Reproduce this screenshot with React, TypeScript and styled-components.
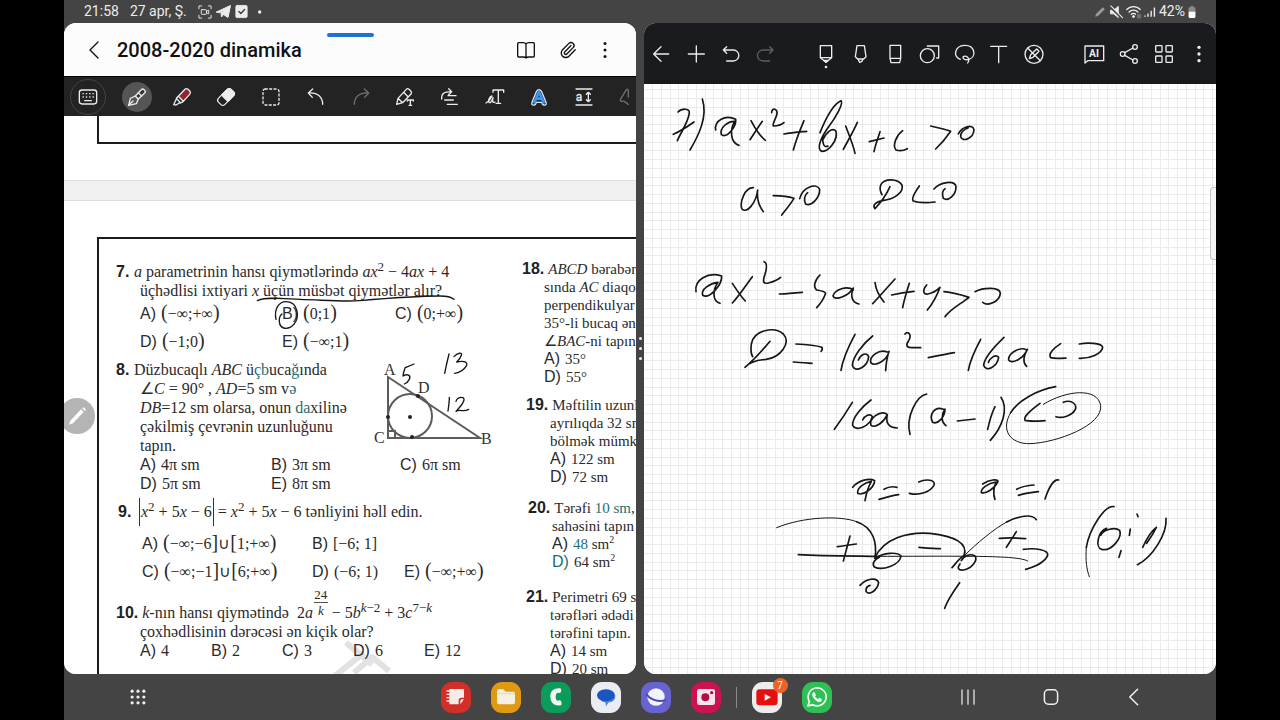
import React from "react";
import styled, { createGlobalStyle } from "styled-components";
import { Paperclip } from "lucide-react";

const Global = createGlobalStyle`
  * { box-sizing: border-box; }
  body { margin: 0; background: #000; font-family: Roboto, "Liberation Sans", sans-serif; }
  button { border: 0; padding: 0; background: none; color: inherit; font: inherit; cursor: pointer; }
  p, ul, ol { margin: 0; padding: 0; list-style: none; }
`;

/* ---------- shell ---------- */

const Device = styled.div`
  display: flex;
  flex-direction: column;
  height: 100vh;
  margin: 0 5%;
  background: #444;
  overflow: hidden;
`;

const StatusBar = styled.header`
  display: flex;
  align-items: center;
  justify-content: space-between;
  height: 23px;
  padding: 0 18px 0 20px;
  color: #ececec;
  font-size: 14px;
  line-height: 23px;
`;

const StatusGroup = styled.div<{ $gap: number }>`
  display: flex;
  align-items: center;
  gap: ${(p) => p.$gap}px;
`;

const StatusDate = styled.span`
  padding: 0 7px;
`;

const Split = styled.main`
  flex: 1;
  min-height: 0;
  display: grid;
  grid-template-columns: minmax(0, 1fr) 8px minmax(0, 1fr);
`;

const Pane = styled.section`
  display: flex;
  flex-direction: column;
  min-height: 0;
  overflow: hidden;
  border-radius: 12px;
  background: #fff;
`;

const Divider = styled.div`
  display: flex;
  flex-direction: column;
  align-items: center;
  justify-content: center;
  gap: 7px;
`;

const DividerDot = styled.i`
  width: 3px;
  height: 3px;
  border-radius: 50%;
  background: #f4f4f4;
`;

const Icon = styled.svg<{ $size?: number }>`
  display: block;
  flex: none;
  width: ${(p) => p.$size ?? 20}px;
  height: ${(p) => p.$size ?? 20}px;
  fill: none;
  stroke: currentColor;
  stroke-width: 4;
  stroke-linecap: round;
  stroke-linejoin: round;
  overflow: visible;
`;

/* ---------- left pane: document viewer ---------- */

const DocHeader = styled.div`
  position: relative;
  display: flex;
  align-items: center;
  height: 53px;
  flex: none;
  padding: 0 15px 0 10px;
  background: #fcfcfc;
  color: #111;

  &::before {
    content: "";
    position: absolute;
    top: 10px;
    left: 50%;
    width: 47px;
    height: 4px;
    margin-left: -23px;
    border-radius: 2px;
    background: #1c73d4;
  }
`;

const HeaderButton = styled.button<{ $width: number }>`
  display: flex;
  align-items: center;
  justify-content: center;
  width: ${(p) => p.$width}px;
  height: 40px;
`;

const DocTitle = styled.h1`
  flex: 1;
  margin: 0 0 0 3px;
  font-size: 20px;
  font-weight: 500;
  line-height: 24px;
`;

const InkBar = styled.div`
  display: flex;
  align-items: center;
  flex: none;
  height: 40px;
  padding-left: 6px;
  border-top: 1px solid #000;
  background: #232323;
  color: #ececec;
`;

const KeyboardButton = styled.button`
  display: flex;
  align-items: center;
  justify-content: center;
  width: 36px;
  height: 36px;
  border: 1px solid #444;
  border-radius: 50%;
`;

const ToolRow = styled.div`
  flex: 1;
  display: flex;
  justify-content: space-between;
  margin: 0 -8px 0 16px;
`;

const ToolButton = styled.button<{ $active?: boolean; $dim?: boolean }>`
  display: flex;
  align-items: center;
  justify-content: center;
  width: 30px;
  height: 30px;
  border-radius: 50%;
  background: ${(p) => (p.$active ? "#555" : "transparent")};
  color: ${(p) => (p.$dim ? "#707070" : "#ececec")};
`;

const DocView = styled.div`
  position: relative;
  flex: 1;
  min-height: 0;
  overflow: hidden;
  background: #fff;
`;

const PreviousSheet = styled.div`
  height: 65px;
  padding-left: 33px;
  border-bottom: 1px solid #ddd;
`;

const PreviousFrame = styled.div`
  height: 28px;
  border: solid #1c1c1c;
  border-width: 0 0 2px 2px;
`;

const SheetGap = styled.div`
  height: 20px;
  background: #f0f0f0;
  border-bottom: 1px solid #ddd;
`;

const Sheet = styled.article`
  position: relative;
  padding: 36px 0 0 33px;
`;

const Frame = styled.div`
  position: relative;
  display: grid;
  grid-template-columns: 406px max-content;
  border: solid #1c1c1c;
  border-width: 2px 0 0 2px;
  padding: 21px 0 40px 17px;
  color: #2a2a2a;
  font-family: "Liberation Serif", serif;
  white-space: nowrap;
`;

const Column = styled.div<{ $size: number; $line: number; $top: number }>`
  padding-top: ${(p) => p.$top}px;
  font-size: ${(p) => p.$size}px;
  line-height: ${(p) => p.$line}px;
`;

const Question = styled.section<{ $before?: number; $start?: number; $hang?: number }>`
  margin-top: ${(p) => p.$before ?? 0}px;
  margin-left: ${(p) => p.$start ?? 0}px;
  padding-left: ${(p) => p.$hang ?? 24}px;
`;

const Lead = styled.p<{ $hang?: number; $line?: number }>`
  margin-left: -${(p) => p.$hang ?? 24}px;
  ${(p) => (p.$line ? `line-height: ${p.$line}px;` : "")}
`;

const Num = styled.b<{ $width?: number }>`
  display: inline-block;
  min-width: ${(p) => p.$width ?? 18}px;
  padding-right: 4px;
  font-family: "Liberation Sans", sans-serif;
  font-size: 16px;
  color: #222;
`;

const Choices = styled.ul<{ $cols: string; $line?: number; $before?: number }>`
  display: grid;
  grid-template-columns: ${(p) => p.$cols};
  margin-top: ${(p) => p.$before ?? 0}px;
  ${(p) => (p.$line ? `line-height: ${p.$line}px;` : "")}
`;

const Key = styled.span<{ $tinted?: boolean }>`
  margin-right: 5px;
  font-family: "Liberation Sans", sans-serif;
  font-size: 16px;
  color: ${(p) => (p.$tinted ? "#1f6d70" : "inherit")};
`;

const Tint = styled.span`
  color: #1f6d70;
`;

const Big = styled.span`
  font-size: 20px;
  line-height: 0;
`;

const Sup = styled.sup`
  font-size: 13px;
  line-height: 0;
`;

const UnitSup = styled(Sup)`
  font-size: 10px;
`;

const Abs = styled.span`
  display: inline-block;
  line-height: 28px;
  padding: 0 1px;
  border: solid #333;
  border-width: 0 1px;
`;

const Fraction = styled.span`
  display: inline-flex;
  flex-direction: column;
  align-items: center;
  vertical-align: bottom;
  margin: -16px 0 4px 1px;
  font-size: 13px;
  line-height: 15px;

  i { border-top: 1px solid #555; padding: 0 4px; }
`;

const WithFigure = styled.div`
  display: grid;
  grid-template-columns: 232px 120px;
`;

const Figure = styled.svg`
  display: block;
  width: 120px;
  height: 95px;
  fill: none;
  stroke: #5c5c5c;
  stroke-width: 2;

  text {
    fill: #333;
    stroke: none;
    font-size: 16px;
  }
`;

const SheetInk = styled.svg`
  position: absolute;
  top: 0;
  left: 0;
  width: 572px;
  height: 473px;
  fill: none;
  stroke: #161616;
  stroke-width: 5;
  stroke-linecap: round;
  stroke-linejoin: round;
  pointer-events: none;
`;

const PenToggle = styled.button`
  position: absolute;
  top: 282px;
  left: -5px;
  display: flex;
  align-items: center;
  justify-content: center;
  width: 36px;
  height: 36px;
  border-radius: 50%;
  background: #b4b4b4;
  color: #fff;
`;

/* ---------- right pane: notebook ---------- */

const NoteBar = styled.div`
  display: flex;
  align-items: center;
  justify-content: space-between;
  flex: none;
  height: 61px;
  background: #191b1f;
  color: #ececec;
`;

const NoteGroup = styled.div`
  display: flex;
`;

const NoteButton = styled.button<{ $dim?: boolean }>`
  display: flex;
  align-items: center;
  justify-content: center;
  width: 35px;
  height: 44px;
  color: ${(p) => (p.$dim ? "#5c5e61" : "#ececec")};
`;

const gridStops = "#ebebeb 0 1px, transparent 1px 9px, #ebebeb 9px 10px, transparent 10px 18px, #ebebeb 18px 19px, transparent 19px 26px, #ebebeb 26px 27px, transparent 27px";

const Notebook = styled.div`
  position: relative;
  flex: 1;
  min-height: 0;
  overflow: hidden;
  background-color: #fff;
  background-image: linear-gradient(${gridStops}), linear-gradient(90deg, ${gridStops});
  background-size: 35px 35px;
  background-position: 8px 5px;
`;

const NoteInk = styled.svg`
  display: block;
  width: 572px;
  height: 590px;
  fill: none;
  stroke: #161616;
  stroke-width: 5;
  stroke-linecap: round;
  stroke-linejoin: round;
`;

const ScrollThumb = styled.div`
  position: absolute;
  top: 103px;
  right: 0;
  width: 6px;
  height: 73px;
  border: 1px solid #c4c4c4;
  border-right: 0;
  border-radius: 4px 0 0 4px;
  background: #f4f4f4;
`;

/* ---------- task bar ---------- */

const TaskBar = styled.footer`
  display: grid;
  grid-template-columns: 1fr auto 1fr;
  align-items: center;
  flex: none;
  height: 46px;
  padding-right: 8px;
  color: #f0f0f0;
`;

const AllApps = styled.button`
  display: flex;
  justify-content: center;
  width: 30px;
  margin-left: 59px;
`;

const Dock = styled.nav`
  display: flex;
  align-items: center;
  gap: 20px;
`;

const AppButton = styled.button<{ $color: string }>`
  position: relative;
  display: flex;
  align-items: center;
  justify-content: center;
  width: 30px;
  height: 31px;
  border-radius: 11px;
  background: ${(p) => p.$color};
`;

const Badge = styled.span`
  position: absolute;
  top: -4px;
  right: -6px;
  width: 15px;
  height: 15px;
  border-radius: 50%;
  background: #ea6425;
  color: #fff;
  font-size: 10px;
  line-height: 15px;
  text-align: center;
`;

const DockRule = styled.i`
  width: 1px;
  height: 21px;
  margin: 0 -5px;
  background: #8a8a8a;
`;

const NavKeys = styled.nav`
  display: flex;
  justify-content: flex-end;
  padding-right: 33px;
`;

const NavKey = styled.button`
  display: flex;
  justify-content: center;
  width: 83px;
`;

/* ---------- drawings ---------- */

type GlyphProps = { size?: number; children: React.ReactNode };

const Glyph = ({ size, children }: GlyphProps) => (
  <Icon viewBox="0 0 60 60" $size={size} aria-hidden="true">
    {children}
  </Icon>
);

const Ink = ({ x, y, strokes, width }: { x: number; y: number; strokes: string[]; width?: number }) => (
  <g transform={`translate(${x} ${y})`} strokeWidth={width}>
    {strokes.map((d) => (
      <path key={d} d={d} />
    ))}
  </g>
);

const firstLines = [
  "M114 66C124 55 150 54 148 68C146 95 122 128 112 152",
  "M100 133C120 124 145 108 162 96",
  "M187 27C204 80 176 136 150 180",
  "M227 120C222 92 256 72 287 88C290 108 262 146 244 134C238 114 262 94 284 94C268 122 272 158 297 166",
  "M333 92C345 115 362 140 376 151",
  "M367 94C352 115 340 135 330 149",
  "M395 68C394 52 416 54 410 75C407 88 396 102 400 108C410 108 425 104 432 98",
  "M432 132C455 128 480 126 500 124",
  "M492 92C480 120 468 150 460 180",
  "M540 128C556 88 580 42 603 32C612 40 586 84 566 110C544 140 528 176 545 184C568 186 594 148 588 124C578 110 558 128 548 150C550 170 556 172 564 168",
  "M617 108C625 130 640 165 645 190",
  "M652 97C640 125 622 155 610 178",
  "M688 155L732 144",
  "M720 125C714 145 706 165 702 185",
  "M788 122C770 135 756 165 768 180C780 184 795 180 802 176",
  "M872 108C890 112 915 118 932 124C918 145 900 165 887 177",
  "M955 132C965 110 1000 100 1002 120C1000 145 968 158 962 140C961 128 972 118 985 113",
  "M340 293C314 292 298 338 306 357C320 372 348 340 353 300C350 325 358 350 370 365",
  "M400 317C425 317 445 319 462 325C450 345 435 362 425 375",
  "M479 326C488 290 530 278 539 298C540 325 512 350 497 342C490 330 494 314 503 308",
  "M750 290C740 312 722 338 705 356C695 344 712 334 728 332C762 328 792 308 786 285C774 265 732 264 722 285C718 300 722 308 726 314",
  "M838 288C826 305 812 326 820 333C840 340 865 338 885 336",
  "M882 297C900 275 945 270 948 290C948 315 925 335 910 325C905 312 908 300 915 296",
  "M168 605C162 570 204 544 245 558C246 586 208 628 188 616C182 598 210 580 234 577C218 600 216 632 240 640",
  "M277 580C290 600 305 622 316 633",
  "M337 560C315 590 295 620 277 639",
  "M372 515C385 520 378 545 372 562C368 578 372 582 385 579C400 575 415 568 422 562",
  "M418 612C440 611 465 609 487 607",
  "M540 555C522 572 520 592 530 600C545 602 554 604 557 610C550 630 538 645 530 653",
  "M640 600C622 586 584 598 579 618C584 634 626 618 640 594C630 618 636 638 657 642",
  "M705 578C708 600 720 622 732 636",
  "M765 567C742 592 718 620 698 641",
  "M755 615C775 610 800 606 822 604",
  "M808 580C800 605 792 630 788 653",
  "M860 585C846 602 850 614 864 612C882 608 892 600 900 592C890 620 875 645 862 660",
  "M912 605C940 608 965 615 987 622C965 640 930 658 915 680",
  "M1005 605C1030 592 1080 590 1081 610C1078 635 1045 650 1028 637",
];

const discriminant = [
  "M240 94C220 118 192 150 165 172C180 154 204 150 228 148C272 142 304 98 280 72C252 48 192 60 184 102C182 120 182 132 188 140",
  "M318 102C345 103 378 106 396 112C398 118 396 122 393 124",
  "M310 156C330 158 350 159 366 160",
  "M495 73C475 110 458 150 453 181",
  "M548 78C520 100 488 140 487 166C494 192 534 170 536 140C530 124 512 134 505 150",
  "M592 126C568 116 538 138 542 158C556 172 592 150 597 124C590 145 588 165 587 182",
  "M645 72C655 60 666 75 656 92C646 106 650 113 665 113L692 113",
  "M715 143C740 138 770 132 793 128",
  "M872 88C855 120 840 150 835 181",
  "M942 82C915 108 882 142 881 166C890 190 922 168 926 142C916 130 900 145 895 157",
  "M1010 120C990 108 954 130 956 150C966 164 1002 144 1012 118C1000 140 998 158 1010 169",
  "M1112 101C1090 115 1074 132 1082 143C1095 147 1115 145 1128 144",
  "M1168 102C1190 98 1236 98 1238 112C1235 132 1200 146 1168 145",
  "M487 277C470 305 450 335 433 358",
  "M543 270C515 290 486 325 488 346C496 366 540 350 547 320C540 308 524 318 518 330",
  "M590 312C570 300 536 326 543 346C556 356 582 336 592 314C586 338 596 354 622 354",
  "M710 252C680 258 646 320 660 373",
  "M760 298C734 286 716 315 728 337C745 344 765 320 765 297C752 316 754 336 768 347",
  "M802 333L855 327",
  "M915 290C905 310 898 335 893 358",
  "M933 262C956 296 938 350 901 391",
  "M1097 230C1042 240 985 270 962 308",
  "M1050 280C1030 295 998 318 1005 331C1020 335 1045 333 1065 332",
  "M1120 277C1140 268 1160 280 1157 296C1148 318 1114 326 1098 320",
];

const answerRing = ["M962 308C930 362 962 402 1020 401C1100 398 1240 346 1232 286C1222 232 1130 240 1060 283"];

const numberLine = [
  "M278 82C295 60 330 53 344 62C342 86 308 108 293 100C290 84 312 68 334 64C322 85 318 105 315 122",
  "M372 88C385 80 400 79 411 82",
  "M357 118C378 112 400 106 416 104",
  "M476 66C500 55 528 60 522 76C510 96 478 108 448 100",
  "M668 72C690 58 712 57 714 64C704 86 678 102 664 98C662 84 685 70 708 66C700 86 700 105 705 118",
  "M770 88C785 80 805 76 822 75",
  "M775 106C795 100 815 97 835 95",
  "M896 60C882 56 866 84 855 117",
  "M232 260C250 258 270 255 289 252",
  "M270 228C264 252 256 280 250 303",
  "M345 295C370 278 412 275 423 288C420 315 366 334 342 320C335 308 346 298 358 292",
  "M477 262C500 264 520 266 541 266",
  "M614 286C598 294 588 310 576 323",
  "M600 312C590 324 596 332 610 330C636 326 654 300 645 288C632 280 612 286 604 302",
  "M718 235C745 233 775 234 797 236",
  "M769 215C760 230 748 248 739 262",
  "M790 268C830 263 866 270 863 286C855 305 825 320 797 328",
  "M115 284C190 288 270 288 345 289",
  "M300 376C318 356 350 350 356 368C352 392 326 408 318 394C317 382 322 378 330 376",
  "M599 368C580 395 562 420 554 445",
  "M1040 205C1014 214 1004 262 1025 268C1055 275 1088 232 1079 211C1066 200 1030 208 1022 226",
  "M1131 162L1134 170",
  "M1111 207L1108 226",
  "M1083 272L1077 292",
  "M1148 262C1160 236 1175 212 1189 202C1178 225 1168 238 1160 250",
  "M1218 175C1222 220 1178 292 1132 314",
  "M345 292C372 236 440 215 510 220C584 228 626 250 612 288",
  "M1062 140C1034 134 988 208 979 262",
  "M290 185C340 202 352 248 345 295",
  "M740 186C775 168 815 160 829 179",
];

const thinLines = [
  "M50 203C130 170 240 166 290 185",
  "M345 289C450 289 540 288 640 289C720 290 785 292 803 303",
  "M614 286C650 250 700 208 740 186",
  "M979 262C976 300 980 330 988 350",
];

/* ---------- app ---------- */

export default function App() {
  return (
    <Device>
      <Global />
      <StatusBar>
        <StatusGroup $gap={4}>
          <time>21:58</time>
          <StatusDate>27 apr, Ş.</StatusDate>
          <Glyph size={14}>
            <path d="M4 16V4H16M44 4H56V16M56 44V56H44M16 56H4V44" />
            <rect x="14" y="20" width="22" height="20" rx="3" />
            <path d="M36 27l10-5v16l-10-5" />
          </Glyph>
          <Glyph size={15}>
            <path d="M2 32L58 6L48 54L30 42L22 52L20 36L44 18L16 34Z" fill="currentColor" />
          </Glyph>
          <Glyph size={13}>
            <rect x="4" y="2" width="52" height="56" rx="6" fill="currentColor" />
            <path d="M18 30l9 9 17-18" stroke="#444" strokeWidth="7" />
          </Glyph>
          <Glyph size={10}>
            <circle cx="46" cy="30" r="10" fill="currentColor" stroke="none" />
          </Glyph>
        </StatusGroup>
        <StatusGroup $gap={3}>
          <Glyph size={12}>
            <path d="M6 54l4-14L44 6l10 10L20 50Z" fill="#999" stroke="none" />
          </Glyph>
          <Glyph size={14}>
            <path d="M8 22h12L40 6v48L20 38H8Z" fill="currentColor" />
            <path d="M4 6L56 58" stroke="#444" strokeWidth="9" />
            <path d="M8 4L58 54" strokeWidth="5" />
          </Glyph>
          <Glyph size={15}>
            <path d="M3 22C18 6 42 6 57 22M12 32C22 22 38 22 48 32M21 41C26 36 34 36 38 41" strokeWidth="5" />
            <circle cx="30" cy="50" r="4" fill="currentColor" />
            <path d="M48 42v14M56 42v14" stroke="#999" />
          </Glyph>
          <Glyph size={12}>
            <path d="M5 54v-6M20 54V38M36 54V24M52 54V8" strokeWidth="7" strokeLinecap="butt" />
          </Glyph>
          <StatusGroup $gap={1}>
            <span>42%</span>
            <Icon viewBox="0 0 30 42" $size={12} aria-hidden="true">
              <path d="M10 0h10v4h7v18H3V4h7Z" fill="#8a8a8a" stroke="none" />
              <path d="M3 20h24v18q0 4-4 4H7q-4 0-4-4Z" fill="#fff" stroke="none" />
            </Icon>
          </StatusGroup>
        </StatusGroup>
      </StatusBar>

      <Split>
        <Pane>
          <DocHeader>
            <HeaderButton $width={40} aria-label="Back">
              <Glyph>
                <path d="M42 6L18 30L42 54" />
              </Glyph>
            </HeaderButton>
            <DocTitle>2008-2020 dinamika</DocTitle>
            <HeaderButton $width={43} aria-label="Reading mode">
              <Glyph>
                <path d="M30 12Q27 8 22 8H8Q5 8 5 11V48Q5 51 8 51H22Q27 51 30 54Q33 51 38 51H52Q55 51 55 48V11Q55 8 52 8H38Q33 8 30 12V54" />
              </Glyph>
            </HeaderButton>
            <HeaderButton $width={42} aria-label="Attachments">
              <Paperclip size={18} strokeWidth={1.8} />
            </HeaderButton>
            <HeaderButton $width={32} aria-label="More options">
              <Glyph size={18}>
                <g fill="currentColor" stroke="none">
                  <circle cx="30" cy="8" r="5" />
                  <circle cx="30" cy="30" r="5" />
                  <circle cx="30" cy="52" r="5" />
                </g>
              </Glyph>
            </HeaderButton>
          </DocHeader>

          <InkBar>
            <KeyboardButton aria-label="Keyboard">
              <Glyph>
                <rect x="4" y="9" width="52" height="42" rx="8" />
                <path d="M15 20h1M25 20h1M35 20h1M45 20h1M15 30h1M25 30h1M35 30h1M45 30h1M20 41h20" />
              </Glyph>
            </KeyboardButton>
            <ToolRow>
              <ToolButton $active aria-label="Pen">
                <Glyph>
                  <path d="M5 55L10 34L25 27L34 36L28 50Z" />
                  <path d="M5 55L18 42" />
                  <path d="M25 27L43 8Q47 4 51 8L53 10Q57 14 53 18L34 36Z" fill="#333" />
                  <path d="M34 17L44 27" />
                </Glyph>
              </ToolButton>
              <ToolButton aria-label="Highlighter">
                <Glyph>
                  <path d="M19 28L39 7Q43 3 48 7L54 13Q57 17 53 22L34 43Z" fill="#8f2633" />
                  <path d="M19 28L13 34L26 48L34 43M13 36L5 53L12 54L24 47" />
                </Glyph>
              </ToolButton>
              <ToolButton aria-label="Eraser">
                <Glyph size={18}>
                  <rect x="15" y="0" width="30" height="60" rx="10" transform="rotate(45 30 30)" />
                  <path d="M15 36V10Q15 0 25 0H35Q45 0 45 10V36Z" transform="rotate(45 30 30)" fill="currentColor" />
                </Glyph>
              </ToolButton>
              <ToolButton aria-label="Select">
                <Glyph>
                  <rect x="6" y="6" width="48" height="48" rx="7" strokeDasharray="6 7" />
                </Glyph>
              </ToolButton>
              <ToolButton aria-label="Undo">
                <Glyph>
                  <path d="M20 6L7 18L19 31M7 18C36 16 50 30 50 52" />
                </Glyph>
              </ToolButton>
              <ToolButton $dim aria-label="Redo">
                <Glyph>
                  <path d="M40 6L53 18L41 31M53 18C24 16 10 30 10 52" />
                </Glyph>
              </ToolButton>
              <ToolButton aria-label="Handwriting to text">
                <Glyph>
                  <path d="M5 52L9 34L34 7Q38 3 42 7L48 13Q51 17 48 21L23 47ZM26 16L39 29M9 34L23 47" />
                  <path d="M37 42V39H55V42M46 39V55M42 55H50" />
                </Glyph>
              </ToolButton>
              <ToolButton aria-label="Straighten writing">
                <Glyph>
                  <path d="M5 36C4 20 12 14 34 14M26 5L35 14L26 23M24 26H48M14 39H40M22 52H52" />
                </Glyph>
              </ToolButton>
              <ToolButton aria-label="Convert style">
                <Glyph>
                  <path d="M24 16V9H56V16M40 9V49M33 49H47" />
                  <path d="M3 48C10 44 18 34 21 27C12 30 8 44 13 47C18 48 22 38 24 32C22 40 22 50 30 45" />
                </Glyph>
              </ToolButton>
              <ToolButton aria-label="Text style">
                <Glyph>
                  <path d="M9 46L22 14Q30 2 38 14L51 46Q54 56 44 54Q40 54 38 46H22Q20 54 16 54Q6 56 9 46Z" stroke="#d8e6f4" strokeWidth="4" fill="#12304f" />
                  <path d="M16 46L30 15L44 46M21 35H39" stroke="#3f95ee" strokeWidth="8" />
                </Glyph>
              </ToolButton>
              <ToolButton aria-label="Align spacing">
                <Glyph>
                  <path d="M6 6H54M6 54H54M43 17V43M37 22L43 16L49 22M37 38L43 44L49 38" />
                  <text x="5" y="42" fontSize="36" fill="currentColor" strokeWidth="1" fontFamily="Roboto, sans-serif">a</text>
                </Glyph>
              </ToolButton>
              <ToolButton $dim aria-label="More tools">
                <Glyph>
                  <path d="M4 38L22 8Q27 4 28 12V30M4 38Q4 46 14 42L28 52" />
                </Glyph>
              </ToolButton>
            </ToolRow>
          </InkBar>

          <DocView>
            <PreviousSheet>
              <PreviousFrame />
            </PreviousSheet>
            <SheetGap />
            <Sheet>
              <SheetInk viewBox="0 0 1716 1419" aria-hidden="true">
                <path d="M812 1425L900 1355M846 1325L925 1390M870 1415L925 1368L975 1410" stroke="#e2e2e2" strokeWidth="18" strokeLinecap="butt" />
              </SheetInk>
              <Frame>
                <Column $size={16} $line={19} $top={2}>
                  <Question>
                    <Lead>
                      <Num>7.</Num><i>a</i> parametrinin hansı qiymətlərində <i>ax</i><Sup>2</Sup> − 4<i>ax</i> + 4
                    </Lead>
                    <p>üçhədlisi ixtiyari <i>x</i> üçün müsbət qiymətlər alır?</p>
                    <Choices $cols="142px 113px auto" $line={28}>
                      <li><Key>A)</Key><Big>(</Big>−∞;+∞<Big>)</Big></li>
                      <li><Key>B)</Key><Big>(</Big>0;1<Big>)</Big></li>
                      <li><Key>C)</Key><Big>(</Big>0;+∞<Big>)</Big></li>
                      <li><Key>D)</Key><Big>(</Big>−1;0<Big>)</Big></li>
                      <li><Key>E)</Key><Big>(</Big>−∞;1<Big>)</Big></li>
                    </Choices>
                  </Question>

                  <Question $before={4}>
                    <WithFigure>
                      <div>
                        <Lead><Num>8.</Num>Düzbucaqlı <i>ABC</i> ü<Tint>çb</Tint>uca<Tint>ğ</Tint>ında</Lead>
                        <p>∠<i>C</i> = 90° , <i>AD</i>=5 sm v<Tint>ə</Tint></p>
                        <p><i>DB</i>=12 sm olarsa, onun <Tint>da</Tint>xilinə</p>
                        <p>çəkilmiş çevrənin uzunluğunu</p>
                        <p>tapın.</p>
                      </div>
                      <Figure viewBox="0 0 120 95" role="img" aria-label="Triangle ABC with inscribed circle">
                        <path d="M16 17V78H108Z" />
                        <circle cx="38" cy="56" r="22" />
                        <path d="M16 71H23V78" />
                        <g fill="#222" stroke="none">
                          <circle cx="38" cy="57" r="2" />
                          <circle cx="46" cy="36" r="2" />
                          <circle cx="16" cy="57" r="2" />
                          <circle cx="40" cy="77" r="2" />
                        </g>
                        <text x="12" y="15">A</text>
                        <text x="46" y="33">D</text>
                        <text x="2" y="83">C</text>
                        <text x="109" y="84">B</text>
                      </Figure>
                    </WithFigure>
                    <Choices $cols="131px 129px auto">
                      <li><Key>A)</Key>4π sm</li>
                      <li><Key>B)</Key>3π sm</li>
                      <li><Key>C)</Key>6π sm</li>
                      <li><Key>D)</Key>5π sm</li>
                      <li><Key>E)</Key>8π sm</li>
                    </Choices>
                  </Question>

                  <Question $before={5} $start={2}>
                    <Lead $line={28}>
                      <Num $width={21}>9.</Num><Abs><i>x</i><Sup>2</Sup> + 5<i>x</i> − 6</Abs> = <i>x</i><Sup>2</Sup> + 5<i>x</i> − 6 tənliyini həll edin.
                    </Lead>
                    <Choices $cols="170px auto" $line={28} $before={4}>
                      <li><Key>A)</Key><Big>(</Big>−∞;−6<Big>]</Big>∪<Big>[</Big>1;+∞<Big>)</Big></li>
                      <li><Key>B)</Key>[−6; 1]</li>
                    </Choices>
                    <Choices $cols="170px 92px auto" $line={28}>
                      <li><Key>C)</Key><Big>(</Big>−∞;−1<Big>]</Big>∪<Big>[</Big>6;+∞<Big>)</Big></li>
                      <li><Key>D)</Key>(−6; 1)</li>
                      <li><Key>E)</Key><Big>(</Big>−∞;+∞<Big>)</Big></li>
                    </Choices>
                  </Question>

                  <Question $before={17}>
                    <Lead>
                      <Num>10.</Num><i>k</i>-nın hansı qiymətində&nbsp; 2<i>a</i>
                      <Fraction><span>24</span><i>k</i></Fraction> − 5<i>b</i><Sup><i>k</i>−2</Sup> + 3<i>c</i><Sup>7−<i>k</i></Sup>
                    </Lead>
                    <p>çoxhədlisinin dərəcəsi ən kiçik olar?</p>
                    <Choices $cols="repeat(5, 71px)">
                      <li><Key>A)</Key>4</li>
                      <li><Key>B)</Key>2</li>
                      <li><Key>C)</Key>3</li>
                      <li><Key>D)</Key>6</li>
                      <li><Key>E)</Key>12</li>
                    </Choices>
                  </Question>
                </Column>

                <Column $size={15} $line={18} $top={0}>
                  <Question $hang={22}>
                    <Lead $hang={22}><Num>18.</Num><i>ABCD</i> bərabər</Lead>
                    <p>sında <i>AC</i> diaqo</p>
                    <p>perpendikulyar</p>
                    <p>35°-li bucaq ən</p>
                    <p>∠<i>BAC</i>-ni tapın</p>
                    <Choices $cols="auto">
                      <li><Key>A)</Key>35°</li>
                      <li><Key>D)</Key>55°</li>
                    </Choices>
                  </Question>
                  <Question $before={10} $start={4}>
                    <Lead><Num>19.</Num>Məftilin uzunl</Lead>
                    <p>ayrılıqda 32 sm</p>
                    <p>bölmək mümk</p>
                    <Choices $cols="auto">
                      <li><Key>A)</Key>122 sm</li>
                      <li><Key>D)</Key>72 sm</li>
                    </Choices>
                  </Question>
                  <Question $before={13} $start={6}>
                    <Lead><Num>20.</Num>Tərəfi <Tint>10</Tint> <Tint>sm</Tint>,</Lead>
                    <p>sahəsini tapın</p>
                    <Choices $cols="auto">
                      <li><Key>A)</Key><Tint>48</Tint> sm<UnitSup>2</UnitSup></li>
                      <li><Key $tinted>D)</Key>64 sm<UnitSup>2</UnitSup></li>
                    </Choices>
                  </Question>
                  <Question $before={17} $start={4}>
                    <Lead><Num>21.</Num>Perimetri 69 s</Lead>
                    <p>tərəfləri ədədi</p>
                    <p>tərəfini tapın.</p>
                    <Choices $cols="auto">
                      <li><Key>A)</Key>14 sm</li>
                      <li><Key>D)</Key>20 sm</li>
                    </Choices>
                  </Question>
                </Column>
              </Frame>
              <SheetInk viewBox="0 0 1716 1419" role="img" aria-label="Handwritten marks: 5, 13, 12">
                <Ink
                  x={858}
                  y={87}
                  width={4}
                  strokes={[
                    "M-278 212C-255 200 -200 206 -150 208C-80 210 -20 216 30 212C120 204 220 198 270 198C290 198 305 202 312 208",
                    "M168 412L192 402M166 412C162 422 160 430 159 438C172 430 184 436 178 448C174 456 168 460 163 462",
                    "M297 372C292 392 288 410 284 430",
                    "M312 380C322 368 338 366 334 376C330 388 324 392 320 396C336 392 354 394 350 406C342 420 326 428 314 430",
                    "M298 502C298 516 296 530 294 543",
                    "M318 514C322 500 344 498 342 510C338 526 322 538 318 544C330 536 340 548 356 538",
                  ]}
                />
                <Ink x={0} y={87} width={4} strokes={["M636 268C630 240 642 214 668 215C702 217 708 260 690 283C672 302 648 298 646 275C645 262 648 256 654 252"]} />
              </SheetInk>
            </Sheet>
            <PenToggle aria-label="Toggle pen">
              <Glyph>
                <path d="M6 56L10 44L42 10L50 18L18 52Z" fill="currentColor" stroke="none" />
                <path d="M46 7L50 4L57 11L53 15Z" fill="currentColor" stroke="none" />
              </Glyph>
            </PenToggle>
          </DocView>
        </Pane>

        <Divider>
          <DividerDot />
          <DividerDot />
          <DividerDot />
        </Divider>

        <Pane>
          <NoteBar>
            <NoteGroup>
              <NoteButton aria-label="Back">
                <Glyph><path d="M27 8L5 30L27 52M5 30H50" /></Glyph>
              </NoteButton>
              <NoteButton aria-label="Add">
                <Glyph><path d="M28 6V54M4 30H52" /></Glyph>
              </NoteButton>
              <NoteButton aria-label="Undo">
                <Glyph><path d="M14 8L4 18L14 28M4 18H34A16 16 0 0 1 34 51H14" /></Glyph>
              </NoteButton>
              <NoteButton $dim aria-label="Redo">
                <Glyph><path d="M38 8L48 18L38 28M48 18H18A16 16 0 0 0 18 51H38" /></Glyph>
              </NoteButton>
            </NoteGroup>
            <NoteGroup>
              <NoteButton aria-label="Pen">
                <Glyph>
                  <path d="M16 5H50V41L33 55L16 41ZM16 41H50" />
                  <path d="M26 49H40L33 55Z" fill="currentColor" />
                  <circle cx="33" cy="69" r="4" fill="currentColor" stroke="none" />
                </Glyph>
              </NoteButton>
              <NoteButton aria-label="Marker">
                <Glyph>
                  <path d="M21 5H43L48 38L41 45H23L16 38ZM24 45L29 55L36 52L39 45" />
                </Glyph>
              </NoteButton>
              <NoteButton aria-label="Eraser">
                <Glyph><path d="M15 4H47V43L44 56H18L15 43ZM15 43H47" /></Glyph>
              </NoteButton>
              <NoteButton aria-label="Shapes">
                <Glyph>
                  <circle cx="22" cy="35" r="21" />
                  <path d="M22 6H56V42H50" />
                </Glyph>
              </NoteButton>
              <NoteButton aria-label="Lasso">
                <Glyph>
                  <path d="M16 46C-8 36 0 6 28 4C60 3 66 38 42 46C30 50 22 44 25 38C32 33 48 42 38 57" />
                </Glyph>
              </NoteButton>
              <NoteButton aria-label="Text">
                <Glyph><path d="M2 7H50M26 7V56" /></Glyph>
              </NoteButton>
              <NoteButton aria-label="Pen only mode">
                <Glyph>
                  <circle cx="27" cy="31" r="27" />
                  <path d="M8 12L46 50M13 44L17 32L35 15L42 22L24 40Z" />
                </Glyph>
              </NoteButton>
            </NoteGroup>
            <NoteGroup>
              <NoteButton aria-label="AI assistant">
                <Glyph>
                  <path d="M3 6H59V50H11L3 57Z" />
                  <text x="15" y="39" fontSize="31" fontWeight="700" fill="currentColor" stroke="none" fontFamily="Roboto, sans-serif">AI</text>
                </Glyph>
              </NoteButton>
              <NoteButton aria-label="Share">
                <Glyph>
                  <circle cx="11" cy="30" r="7" />
                  <circle cx="48" cy="9" r="7" />
                  <circle cx="48" cy="51" r="7" />
                  <path d="M17 26L42 12M17 34L42 48" />
                </Glyph>
              </NoteButton>
              <NoteButton aria-label="Pages">
                <Glyph>
                  <rect x="5" y="5" width="19" height="19" rx="2" />
                  <rect x="36" y="5" width="19" height="19" rx="2" />
                  <rect x="5" y="36" width="19" height="19" rx="2" />
                  <rect x="36" y="36" width="19" height="19" rx="2" />
                </Glyph>
              </NoteButton>
              <NoteButton aria-label="More options">
                <Glyph>
                  <g fill="currentColor" stroke="none">
                    <circle cx="30" cy="10" r="5" />
                    <circle cx="30" cy="30" r="5" />
                    <circle cx="30" cy="50" r="5" />
                  </g>
                </Glyph>
              </NoteButton>
            </NoteGroup>
          </NoteBar>
          <Notebook>
            <NoteInk
              viewBox="0 0 1716 1770"
              role="img"
              aria-label="Handwritten solution: 7) ax²+bx+c>0, a>0, D<0; ax²−4ax+4>0; D=16a²−16a<0; 16a(a−1)<0; a=0, a=1; (0;1)"
            >
              <Ink x={-12} y={18} strokes={firstLines} />
              <Ink x={138} y={678} strokes={discriminant} />
              <Ink x={138} y={678} strokes={answerRing} width={3} />
              <Ink x={348} y={1128} strokes={numberLine} />
              <Ink x={348} y={1128} strokes={thinLines} width={3} />
            </NoteInk>
            <ScrollThumb />
          </Notebook>
        </Pane>
      </Split>

      <TaskBar>
        <AllApps aria-label="All apps">
          <Glyph size={16}>
            <g fill="currentColor" stroke="none">
              {[8, 30, 52].map((y) => [8, 30, 52].map((x) => <circle key={`${x}-${y}`} cx={x} cy={y} r="6" />))}
            </g>
          </Glyph>
        </AllApps>
        <Dock aria-label="Apps">
          <AppButton $color="#d12f27" aria-label="Notes">
            <Glyph>
              <path d="M8 6H54V32H46Q38 32 38 40V52H10V6Z" fill="#f3ece8" stroke="none" />
              <path d="M43 52V42Q43 37 48 37H54Z" fill="#f3ece8" stroke="none" />
              <path d="M3 12H12M3 22H12M3 32H12M3 42H12" stroke="#f3ece8" />
            </Glyph>
          </AppButton>
          <AppButton $color="#e09a12" aria-label="Files">
            <Glyph>
              <path d="M3 13Q3 7 8 7H22L29 14H51Q57 14 57 19V46Q57 52 51 52H9Q3 52 3 46Z" fill="#f6efe2" stroke="none" />
              <path d="M5 20H55" stroke="#e6c88a" strokeWidth="2" />
            </Glyph>
          </AppButton>
          <AppButton $color="#0b9c5b" aria-label="Phone">
            <Glyph>
              <path d="M42 4C22 2 12 14 13 30C14 48 26 58 44 55Q48 54 47 49L45 43Q44 39 40 40L34 41C28 38 27 22 34 17L40 18Q44 18 45 14L46 9Q46 5 42 4Z" fill="#f4f4f4" stroke="none" />
            </Glyph>
          </AppButton>
          <AppButton $color="#ebedf2" aria-label="Messages">
            <Glyph>
              <path d="M11 27C11 14 22 8 34 8C48 8 58 16 58 28C58 40 48 46 38 46L30 58L28 46C18 45 11 38 11 27Z" fill="#4a82de" stroke="none" />
              <ellipse cx="29" cy="25" rx="26" ry="18" fill="#1b55c0" stroke="none" />
            </Glyph>
          </AppButton>
          <AppButton $color="#6763d0" aria-label="Internet">
            <Glyph>
              <circle cx="30" cy="30" r="26" fill="#f2f2fa" stroke="none" />
              <path d="M2 22C10 36 34 46 58 40" stroke="#4d48b8" strokeWidth="6" />
            </Glyph>
          </AppButton>
          <AppButton $color="#cc1350" aria-label="Camera">
            <Glyph>
              <rect x="3" y="6" width="54" height="48" rx="7" fill="#f6e6ec" stroke="none" />
              <circle cx="28" cy="31" r="12" fill="#b01045" stroke="none" />
              <circle cx="47" cy="17" r="5" fill="#b01045" stroke="none" />
            </Glyph>
          </AppButton>
          <DockRule />
          <AppButton $color="#ededed" aria-label="YouTube, 7 notifications">
            <Glyph>
              <rect x="-2" y="7" width="64" height="48" rx="10" fill="#e60f0f" stroke="none" />
              <path d="M23 21L42 31L23 41Z" fill="#fff" stroke="none" />
            </Glyph>
            <Badge>7</Badge>
          </AppButton>
          <AppButton $color="#2fbf55" aria-label="WhatsApp">
            <Glyph>
              <path d="M3 57L7 43A27 27 0 1 1 17 53Z" stroke="#f4fff6" strokeWidth="5" />
              <path d="M20 16C13 20 15 30 24 38C32 46 42 48 45 40C46 36 40 34 37 32C34 34 34 36 32 36C28 34 25 30 24 28C27 26 27 24 24 18Q22 15 20 16Z" fill="#f4fff6" stroke="none" />
            </Glyph>
          </AppButton>
        </Dock>
        <NavKeys aria-label="System navigation">
          <NavKey aria-label="Recent apps">
            <Glyph size={18}><path d="M10 6V54M30 6V54M50 6V54" /></Glyph>
          </NavKey>
          <NavKey aria-label="Home">
            <Glyph size={18}><rect x="8" y="6" width="44" height="48" rx="13" strokeWidth="5" /></Glyph>
          </NavKey>
          <NavKey aria-label="Back">
            <Glyph size={18}><path d="M42 4L16 30L42 56" strokeWidth="5" /></Glyph>
          </NavKey>
        </NavKeys>
      </TaskBar>
    </Device>
  );
}
